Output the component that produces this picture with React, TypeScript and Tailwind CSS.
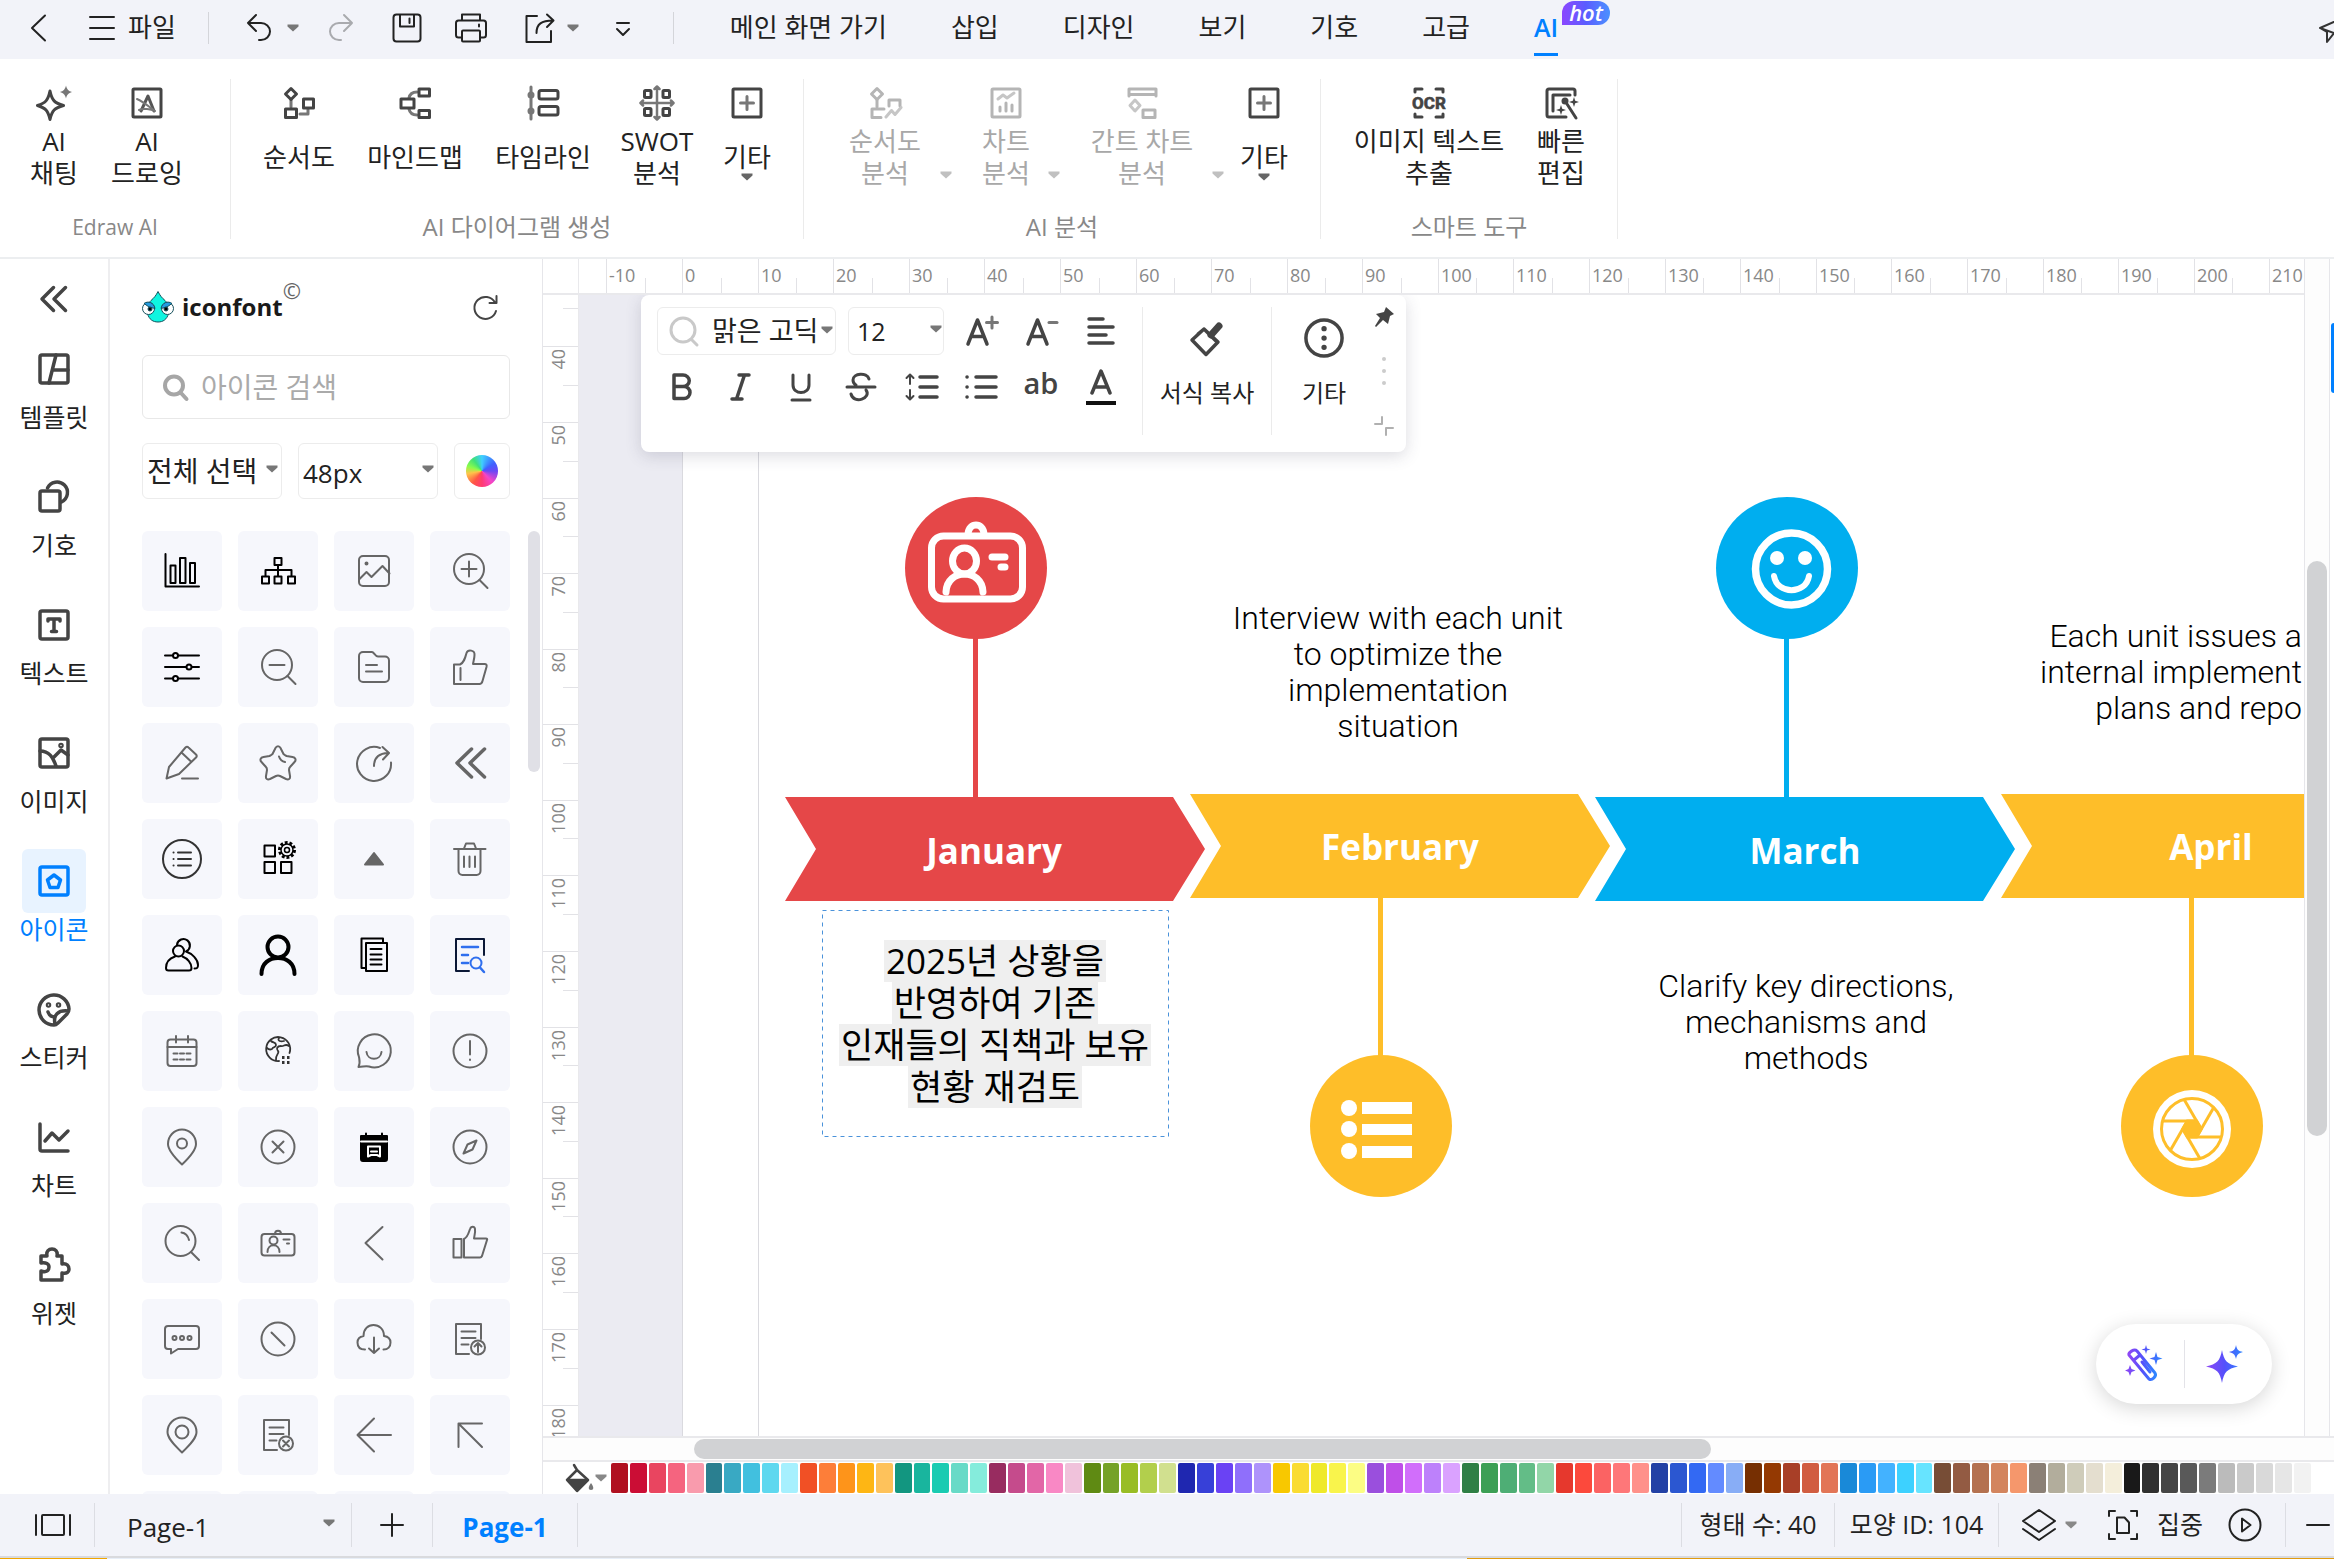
import type { ReactNode } from 'react';
import { clsx } from 'clsx';

// 10 document units at 200% zoom
const RULER_STEP = (96 / 25.4) * 20;

const SWATCHES = [
  '#b01020', '#cb0d35', '#e94560', '#f5647f', '#f99bad', '#2a7f90', '#39a9c3', '#41c0df', '#5fd8ef', '#a6f0fe',
  '#f15025', '#fd7e39', '#fe941a', '#feb614', '#fec25b', '#129680', '#19b59e', '#1acbb2', '#68dac7', '#85ecdc',
  '#982c60', '#c54b8c', '#e266a7', '#f988c5', '#f0c2db', '#5f8a13', '#75a228', '#99bd25', '#b2cf4c', '#d1e08f',
  '#1f27b0', '#3740d8', '#6a42f4', '#8f6ffb', '#ae93fb', '#f8c800', '#fadc32', '#efe92a', '#f9f44c', '#fcfd84',
  '#9a4fdd', '#bf4fe8', '#d16efb', '#bd81fb', '#daa2ff', '#2f7f45', '#3c9f55', '#4eae75', '#63bd87', '#92d6a8',
  '#e6382d', '#fc493c', '#fb6363', '#fe7779', '#ff918a', '#2341a5', '#2b57d1', '#3369f3', '#638bff', '#88adf6',
  '#762f02', '#943902', '#a83f27', '#d15d41', '#e27557', '#1989d8', '#2a9bf5', '#43b2ff', '#3dd1ff', '#67e4ff',
  '#774d36', '#935b43', '#b47150', '#d3855f', '#f5976c', '#8b8076', '#b2ad9c', '#cfccba', '#e4decf', '#f4eedb',
  '#191919', '#303030', '#454545', '#595959', '#7b7b7b', '#bbbbbb', '#cacaca', '#d9d9d9', '#e6e6e6', '#f2f2f2', '#ffffff',
];

interface IconProps {
  size?: number;
  box?: number;
  stroke?: string;
  width?: number;
  fill?: string;
  className?: string;
  children: ReactNode;
}

function Icon({ size = 36, box = 36, stroke = '#444', width = 3, fill = 'none', className, children }: IconProps) {
  return (
    <svg
      width={size}
      height={size}
      viewBox={`0 0 ${box} ${box}`}
      fill={fill}
      stroke={stroke}
      strokeWidth={width}
      strokeLinecap="round"
      strokeLinejoin="round"
      aria-hidden="true"
      className={clsx('shrink-0', className)}
    >
      {children}
    </svg>
  );
}

function Caret({ color = '#777', className }: { color?: string; className?: string }) {
  return (
    <svg width="12" height="8" viewBox="0 0 12 8" fill={color} aria-hidden="true" className={clsx('shrink-0', className)}>
      <path d="M0.5 0.5h11v2L6 7.5 0.5 2.5z" />
    </svg>
  );
}

/* ---------- title bar ---------- */

const MENUS = ['메인 화면 가기', '삽입', '디자인', '보기', '기호', '고급'];

function TitleBar() {
  return (
    <header className="relative flex h-[59px] shrink-0 items-center overflow-hidden bg-[#f2f3f9] pb-1 text-[26px] text-[#222]">
      <button aria-label="뒤로" className="ml-5">
        <Icon width={2} stroke="#222"><path d="M25 5.5L12 18l13 12.5" /></Icon>
      </button>
      <button className="ml-7 flex items-center gap-2">
        <Icon width={2} stroke="#222"><path d="M6 7h24M6 18h24M6 29h24" /></Icon>
        <span>파일</span>
      </button>
      <i className="ml-8 h-8 w-px bg-[#d4d5da]" />
      <button aria-label="실행 취소" className="ml-8">
        <Icon width={2} stroke="#222"><path d="M15 5L7 13l8 8M7 13h13a9 8.5 0 0 1 0 17h-2" /></Icon>
      </button>
      <Caret className="ml-2.5" />
      <button aria-label="다시 실행" className="ml-6">
        <Icon width={2} stroke="#a9aaae"><path d="M21 5l8 8-8 8M29 13H16a9 8.5 0 0 0 0 17h2" /></Icon>
      </button>
      <button aria-label="저장" className="ml-[30px]">
        <Icon width={2} stroke="#222">
          <rect x="4.5" y="4.5" width="27" height="27" rx="3" />
          <path d="M11 5v11.5h14V5M20.5 8.5v4.5" />
        </Icon>
      </button>
      <button aria-label="인쇄" className="ml-7">
        <Icon width={2} stroke="#222">
          <path d="M9 10.5V4.5h18v6M9 27.5H5.5A2.5 2.5 0 0 1 3 25V13a2.5 2.5 0 0 1 2.5-2.5h25A2.5 2.5 0 0 1 33 13v12a2.5 2.5 0 0 1-2.5 2.5H27M26 14.5v2" />
          <rect x="9" y="20.5" width="18" height="11" rx="1" />
        </Icon>
      </button>
      <button aria-label="내보내기" className="ml-8">
        <Icon width={2} stroke="#222">
          <path d="M16 6H5.5v26H30V21M15.5 23c0-9 5-12.5 16.5-12.5M26 4.5l6.5 6-6.5 6.5" />
        </Icon>
      </button>
      <Caret className="ml-2.5" />
      <button aria-label="더 보기" className="ml-[26px]">
        <Icon width={2} stroke="#222"><path d="M12 13h12M12 19l6 6 6-6" /></Icon>
      </button>
      <i className="ml-8 h-8 w-px bg-[#d4d5da]" />
      <nav className="ml-14 flex items-center gap-16">
        {MENUS.map((m) => (
          <a key={m} href="#" className="whitespace-nowrap">{m}</a>
        ))}
        <a href="#" className="relative text-[25px] font-semibold text-[#0080ff]">
          AI
          <span className="absolute inset-x-0 -bottom-2.5 h-[3px] bg-[#0080ff]" />
          <span className="absolute -top-2 left-7 flex h-6 w-12 items-center justify-center rounded-r-full rounded-tl-full bg-linear-to-r from-[#8a45ff] via-[#5a5cff] to-[#4a90ff] pb-0.5 text-[22px] leading-6 font-semibold text-white italic">
            hot
          </span>
        </a>
      </nav>
      <button aria-label="공유" className="absolute top-3 -right-5">
        <Icon width={2} stroke="#333"><path d="M2 16L34 2l-6 26-12-7zM2 16l7 4M9 20v10l7-9" /></Icon>
      </button>
    </header>
  );
}

/* ---------- ribbon ---------- */

const G = '#777';

const ribbonIcons: Record<string, ReactNode> = {
  chat: (
    <Icon>
      <path d="M14 6c2 9.5 4.5 12 13.5 14.5C18.5 23 16 25.5 14 34.5 12 25.5 9.5 23 1.5 20.5 9.5 18 12 15.5 14 6z" />
      <path d="M30 .5c1 4 2.5 5.5 6 6.5-3.5 1-5 2.5-6 6.5-1-4-2.5-5.5-6-6.5 3.5-1 5-2.5 6-6.5z" fill={G} stroke="none" />
    </Icon>
  ),
  draw: (
    <Icon>
      <rect x="4" y="4" width="28" height="28" rx="1" />
      <path d="M12 26l7-15 6 15" stroke="#555" />
      <path d="M8 14c5 2 10 6 18 12-4-2-12-3-16-1" stroke={G} strokeWidth="2" />
    </Icon>
  ),
  flow: (
    <Icon>
      <path d="M10 15v7M19 29h8v-5" stroke={G} />
      <path d="M10 3.5l5.5 5.5-5.5 5.5L4.5 9z" />
      <rect x="22.5" y="14" width="10" height="9" />
      <rect x="4.5" y="24" width="11" height="8.5" />
    </Icon>
  ),
  mind: (
    <Icon>
      <path d="M12 13c1-5 4-6 8-6M12 24c1 5 4 6 8 6" stroke={G} />
      <rect x="4" y="14" width="13" height="9" />
      <rect x="22" y="4" width="10.5" height="7" />
      <rect x="22" y="25.5" width="10.5" height="7" />
    </Icon>
  ),
  time: (
    <Icon>
      <path d="M6 2v32" stroke={G} />
      <circle cx="6" cy="10" r="3.5" fill={G} stroke="none" />
      <circle cx="6" cy="26" r="3.5" fill={G} stroke="none" />
      <rect x="14" y="5.5" width="19" height="8.5" rx="2" />
      <rect x="14" y="21.5" width="19" height="8.5" rx="2" />
    </Icon>
  ),
  swot: (
    <Icon>
      <path d="M18 2v32M2 18h32M15.5 4L18 1.5 20.5 4M15.5 32l2.5 2.5 2.5-2.5M4 15.5L1.5 18 4 20.5M32 15.5l2.5 2.5-2.5 2.5" stroke={G} strokeWidth="2.5" />
      <rect x="5.5" y="5.5" width="6.5" height="7" rx="1" />
      <rect x="24" y="5.5" width="6.5" height="7" rx="1" />
      <rect x="5.5" y="23.5" width="6.5" height="7" rx="1" />
      <rect x="24" y="23.5" width="6.5" height="7" rx="1" />
    </Icon>
  ),
  etc: (
    <Icon>
      <rect x="4" y="4" width="28" height="28" rx="1" />
      <path d="M18 11.5v13M11.5 18h13" stroke={G} />
    </Icon>
  ),
  flowA: (
    <Icon stroke="#b5b5b5">
      <path d="M10 15v7" />
      <path d="M10 3.5l5.5 5.5-5.5 5.5L4.5 9z" />
      <path d="M22 21v-6h11v6M17 24H5v8.5h9" />
      <path d="M19 32l5.5-6.5 3.5 4 6-7" stroke="#c6c6c6" />
    </Icon>
  ),
  chartA: (
    <Icon stroke="#b5b5b5">
      <rect x="4" y="4" width="28" height="28" rx="1" />
      <path d="M10 14l5-4 4 3 7-5" stroke="#c6c6c6" />
      <path d="M12 26v-4M18 26v-8M24 26v-6" />
    </Icon>
  ),
  ganttA: (
    <Icon stroke="#b5b5b5">
      <path d="M5 11V4h27v7M6 9.5h25" />
      <path d="M11 15l5 5.5-5 5.5-5-5.5z" stroke="#c6c6c6" />
      <rect x="19" y="25" width="12" height="7.5" />
    </Icon>
  ),
  ocr: (
    <Icon>
      <path d="M4 7V4h7M25 4h7v3M4 29v3h7M25 32h7v-3" />
      <text x="18" y="24" textAnchor="middle" fontSize="17" fontWeight="800" fill="#444" strokeWidth=".5" fontFamily="Roboto">OCR</text>
    </Icon>
  ),
  quick: (
    <Icon>
      <path d="M32 10V6a2 2 0 0 0-2-2H6a2 2 0 0 0-2 2v24a2 2 0 0 0 2 2h17" />
      <path d="M10 26V10h17" />
      <path d="M24 19l9 14" />
      <circle cx="22" cy="16" r="3.5" fill="#444" stroke="none" />
      <path d="M31 12l1.2 3.8L36 17l-3.8 1.2L31 22l-1.2-3.8L26 17l3.8-1.2zM18 20l1.2 3.8L23 25l-3.8 1.2L18 30l-1.2-3.8L13 25l3.8-1.2z" fill="#444" stroke="none" />
    </Icon>
  ),
};

interface RibbonButtonProps {
  icon: string;
  lines: string[];
  width: string;
  disabled?: boolean;
  caret?: 'below' | 'side';
}

function RibbonButton({ icon, lines, width, disabled, caret }: RibbonButtonProps) {
  return (
    <button disabled={disabled} className="flex items-end text-[26px] leading-8">
      <span className={clsx('flex flex-col items-center', width, disabled ? 'text-[#a8a8a8]' : 'text-[#222]')}>
        {ribbonIcons[icon]}
        <span className="flex h-[72px] flex-col items-center justify-center whitespace-nowrap">
          {lines.map((l) => <span key={l}>{l}</span>)}
          {caret === 'below' && <Caret color="#666" className="-mb-2" />}
        </span>
      </span>
      {caret === 'side' && (
        <span className="flex w-6 justify-center pb-3.5"><Caret color={disabled ? '#c0c0c0' : '#777'} /></span>
      )}
    </button>
  );
}

function RibbonGroup({ label, className, children }: { label: ReactNode; className: string; children: ReactNode }) {
  return (
    <section className="flex flex-col justify-between border-r border-[#ebebeb]">
      <div className={clsx('flex pt-1.5', className)}>{children}</div>
      <h2 className="-mb-1 text-center text-[24px] leading-8 text-[#888]">{label}</h2>
    </section>
  );
}

function Ribbon() {
  return (
    <div className="flex h-[200px] shrink-0 border-b-2 border-[#eceef0] bg-white pt-5 pb-[18px]">
      <RibbonGroup label={<span className="text-[21px]">Edraw AI</span>} className="pr-9 pl-2">
        <RibbonButton icon="chat" lines={['AI', '채팅']} width="w-[92px]" />
        <RibbonButton icon="draw" lines={['AI', '드로잉']} width="w-[94px]" />
      </RibbonGroup>
      <RibbonGroup label="AI 다이어그램 생성" className="px-4">
        <RibbonButton icon="flow" lines={['순서도']} width="w-[104px]" />
        <RibbonButton icon="mind" lines={['마인드맵']} width="w-32" />
        <RibbonButton icon="time" lines={['타임라인']} width="w-32" />
        <RibbonButton icon="swot" lines={['SWOT', '분석']} width="w-[100px]" />
        <RibbonButton icon="etc" lines={['기타']} width="w-20" caret="below" />
      </RibbonGroup>
      <RibbonGroup label="AI 분석" className="gap-3 pr-[34px] pl-8">
        <RibbonButton icon="flowA" lines={['순서도', '분석']} width="w-[98px]" disabled caret="side" />
        <RibbonButton icon="chartA" lines={['차트', '분석']} width="w-[72px]" disabled caret="side" />
        <RibbonButton icon="ganttA" lines={['간트 차트', '분석']} width="w-32" disabled caret="side" />
        <RibbonButton icon="etc" lines={['기타']} width="w-11" caret="below" />
      </RibbonGroup>
      <RibbonGroup label="스마트 도구" className="px-4">
        <RibbonButton icon="ocr" lines={['이미지 텍스트', '추출']} width="w-[184px]" />
        <RibbonButton icon="quick" lines={['빠른', '편집']} width="w-20" />
      </RibbonGroup>
    </div>
  );
}

/* ---------- left rail ---------- */

const RAIL: { label: string; icon: ReactNode }[] = [
  { label: '템플릿', icon: <><rect x="4" y="4" width="28" height="28" rx="2" /><path d="M20 4l-7 28M17 19h15" /></> },
  { label: '기호', icon: <><rect x="4" y="12" width="20" height="20" rx="2" /><path d="M11.5 9a10.5 10.5 0 1 1 14 14" /></> },
  { label: '텍스트', icon: <><rect x="4" y="4" width="28" height="28" rx="2" /><path d="M12 14v-2h12v2M18 12v12M15.5 24.5h5" /></> },
  { label: '이미지', icon: <><rect x="4" y="4" width="28" height="28" rx="2" /><path d="M4 16c9 0 13 6 16 15M18 22l7-7 7 5" /><circle cx="25" cy="10.5" r="1" /></> },
  { label: '아이콘', icon: <><rect x="4" y="4" width="28" height="28" rx="2" /><path d="M18 12l6.5 5-2.5 7.5h-8L11.5 17z" /></> },
  { label: '스티커', icon: <><path d="M33 18A15 15 0 1 0 18 34c2 0 3-1 4-2l9-9c1.5-1.5 2-3 2-5zM19 33c-2-9 3-14 13-13M12 21c1 3 3 5 7 5" /><circle cx="12.5" cy="14" r="1" /><circle cx="22.5" cy="14" r="1" /></> },
  { label: '차트', icon: <path d="M4 5v25a2 2 0 0 0 2 2h26M9 22l7-8 7 7 9-9" /> },
  { label: '위젯', icon: <path d="M5 33v-9c6 2 8-1 8-4s-3-5-8-4V9h6c-1-5 2-7 5-7s6 2 5 7h5v8c5-1 7 2 7 5s-2 5-7 4v7z" /> },
];

function Rail() {
  return (
    <nav className="flex w-[110px] shrink-0 flex-col items-center border-r-2 border-[#eeeef0] bg-white">
      <button aria-label="접기" className="mt-[22px] mb-5">
        <Icon><path d="M17.5 6.5L6 18l11.5 11.5M29.5 6.5L18 18l11.5 11.5" strokeWidth="3.5" /></Icon>
      </button>
      {RAIL.map(({ label, icon }) => {
        const active = label === '아이콘';
        return (
          <a key={label} href="#" className={clsx('flex h-32 flex-col items-center text-[25px] leading-8 whitespace-nowrap', active ? 'text-[#0080ff]' : 'text-[#222]')}>
            <span className={clsx('flex size-16 items-center justify-center rounded-md', active && 'bg-[#e8f3ff]')}>
              <Icon stroke={active ? '#0080ff' : '#444'} width={3.5}>{icon}</Icon>
            </span>
            {label}
          </a>
        );
      })}
    </nav>
  );
}

/* ---------- icon library ---------- */

const K = '#000';

interface Glyph {
  name: string;
  color?: string;
  width?: number;
  art: ReactNode;
}

const docBody = <path d="M35 24V9H10v30h13M15.5 16.5h14M15.5 23h14M15.5 29.5h7" />;

const GLYPHS: Glyph[] = [
  { name: 'bar chart', color: K, art: <><path d="M7.5 7v32.5H41" /><path d="M12.5 18.5h5V36h-5zM22 11h5.5v25H22zM32 16h5v20h-5z" /></> },
  { name: 'hierarchy', color: K, art: <path d="M20.5 11h7v7h-7zM24 18v11M11.5 29v-6h26v6M8 29.5h7v7H8zM20.5 29.5h7v7h-7zM34 29.5h7v7h-7z" /> },
  { name: 'image', art: <><rect x="9" y="9" width="30" height="30" rx="4" /><path d="M9.5 32l7-7 5 5 11-11 7 7.5" /><circle cx="16.5" cy="16.5" r="1" fill="#666" /></> },
  { name: 'zoom in', art: <><circle cx="23" cy="22" r="15" /><path d="M15.5 22h15M23 14.5v15M33.5 33l8 8" /></> },
  { name: 'sliders', color: K, art: <><path d="M7 12.5h8M20 12.5h21M7 24h21M34 24h7M7 35.5h8M20 35.5h21" /><circle cx="17.5" cy="12.5" r="2.5" /><circle cx="31" cy="24" r="2.5" /><circle cx="17.5" cy="35.5" r="2.5" /></> },
  { name: 'zoom out', art: <><circle cx="23" cy="22" r="15" /><path d="M15.5 22h15M33.5 33l8 8" /></> },
  { name: 'folder note', art: <path d="M13 9h9c2 0 3 4.5 6 4.5h7a4 4 0 0 1 4 4V35a4 4 0 0 1-4 4H13a4 4 0 0 1-4-4V13a4 4 0 0 1 4-4zM16 22h11M16 28.5h16" /> },
  { name: 'thumb up', art: <path d="M8 21.5h6c4-2 5-6 6.5-11.5C22 6 29 7 28.5 12c0 3-1 6-1.5 9h11.5c2 0 2.5 1 2 3L36.5 38c-.5 2-1.5 3-3 3H8zM14.5 25v12" /> },
  { name: 'edit', art: <path d="M8.5 39.5L11 28 27.5 8.5c1-1 2-1 3 0l7.5 7c1 1 1 2 0 3L21 35zM23.5 13.5l9.5 9M24 39.5h16" /> },
  { name: 'star', art: <path d="M21.5 9c1-2.5 4-2.5 5 0l3 6c1 1 2 1.5 3 2l6 1c3 .5 4 3 2 5l-4.5 5c-1 1-1 2-1 3l1 6c.5 3-1.5 4-4 3l-6-3c-1-.5-3-.5-4 0l-6 3c-2.5 1-4.5 0-4-3l1-6c0-1 0-2-1-3l-4.5-5c-2-2-1-4.5 2-5l6-1c1-.5 2-1 3-2zM25 17.5c1 3 3 5 6 5.5" /> },
  { name: 'share', art: <path d="M30 9a17 17 0 1 0 11 14.5M24 27c0-8 4-12.5 14-13M32.5 8l6.5 6-6 6.5" /> },
  { name: 'collapse', width: 3.5, art: <path d="M25.5 10L11 24l14.5 14M38.5 10L24 24l14.5 14" /> },
  { name: 'list circle', color: '#333', art: <><circle cx="24" cy="24" r="19" /><path d="M20 17.5h13M20 24h13M20 30.5h13M15.5 17.5h.1M15.5 24h.1M15.5 30.5h.1" /></> },
  { name: 'apps settings', color: K, art: <><path d="M10.5 10.5H21v11H10.5zM10.5 27H21v11H10.5zM27 27h10.5v11H27z" /><circle cx="33" cy="15" r="7.5" strokeDasharray="2.8 1.9" strokeWidth="3" strokeLinecap="butt" /><circle cx="33" cy="15" r="6" strokeWidth="1.5" /><circle cx="33" cy="15" r="2.5" strokeWidth="1.5" /></> },
  { name: 'triangle', art: <path d="M24 18l9 11.5H15z" fill="#666" /> },
  { name: 'trash', art: <path d="M8 14h31.5M18 13.5l2-5h8l2 5M12.5 14v22a4 4 0 0 0 4 4h14a4 4 0 0 0 4-4V14M18 21.5V32M23.5 21.5V32M29 21.5V32" /> },
  { name: 'group', color: K, art: <><circle cx="20.5" cy="20" r="5.5" /><path d="M17 25.5C11 27.5 8 32 8 37c0 2 .5 2.5 2.5 2.5H31c2 0 2.5-.5 2.5-2.5 0-5-4-9.5-9-11.5" /><path d="M19 13.5a6.5 6.5 0 1 1 9 7c6 2 12 8 12 13.5 0 3-1 3.5-3.5 3.5" /></> },
  { name: 'person', color: K, width: 4, art: <><circle cx="24" cy="16" r="10.5" /><path d="M7.5 43c0-11 8-16 16.5-16s16.5 5 16.5 16" /></> },
  { name: 'documents', color: K, art: <path d="M15.5 37h-4V7.5H33v4M16 12h21v28H16zM20.5 18h11M20.5 23.5h11M20.5 28.5h11M20.5 33.5h11" /> },
  { name: 'document search', color: '#0b1836', art: <><path d="M38 24V8H10v32h13" /><path d="M16 16h16M16 24h6M16 32h6M34 36.5l4 4.5" stroke="#2f6fee" strokeWidth="2.5" /><circle cx="30" cy="32" r="5.5" stroke="#2f6fee" /></> },
  { name: 'calendar', art: <><rect x="9.5" y="12.5" width="29" height="26.5" rx="3" /><path d="M9.5 20h29M18 9v6.5M30 9v6.5M15.5 26.5h4M22 26.5h4M28.5 26.5h4M15.5 32.5h4M22 32.5h4M28.5 32.5h4" /></> },
  { name: 'globe', color: '#333', width: 1.8, art: <><path d="M25 34a12 12 0 1 1 10.5-8" /><path d="M17 14c2 2 5 1 5 4s-3 1-4 4c-2 1-4 0-5-1M25 11c-2 3 2 4 5 3M35 19c-4-3-5 1-8 0-4 0-5 3-3 5s-3 4-2 9" /><path d="M28 30.5h2.5M33 30.5h2.5M28 35.5h2.5M33 35.5h2.5" strokeWidth="3" strokeLinecap="butt" /></> },
  { name: 'chat smile', art: <path d="M8.5 40c2-4 1-7 .5-10A16.5 16.5 0 1 1 19 39.5c-4-1-6 .5-10.5.5zM16.5 25c1 9 14 9 15 0" /> },
  { name: 'alert', art: <><circle cx="24" cy="24" r="16.5" /><path d="M24 14v13.5M24 32.5v.5" /></> },
  { name: 'place', art: <><path d="M24 41.5C15 33 10 27 10 21a14 14.5 0 0 1 28 0c0 6-5 12-14 20.5z" /><circle cx="24" cy="20.5" r="5" /></> },
  { name: 'close circle', art: <><circle cx="24" cy="24" r="16.5" /><path d="M18.5 18.5l11 11M29.5 18.5l-11 11" /></> },
  { name: 'schedule', color: K, art: <><path d="M11 13h26v23a2 2 0 0 1-2 2H13a2 2 0 0 1-2-2z" fill="#000" /><path d="M16 10.5v4M32 10.5v4" /><path d="M11 18.5h26M18 23.5h12v10l-3-1.5h-6l-3 1.5zM21 28.5h6" stroke="#fff" /></> },
  { name: 'compass', art: <><circle cx="24" cy="24" r="16.5" /><path d="M30.5 17.5l-4 9-9 4 4-9z" /></> },
  { name: 'search', art: <><circle cx="22.5" cy="22" r="15" /><path d="M33 33l8 8M23.5 13.5c4 .5 6.5 3.5 7.5 7.5" /></> },
  { name: 'id card', art: <><rect x="7.5" y="15" width="33" height="21.5" rx="3" /><path d="M21 15c0-4.5 6-4.5 6 0M13.5 33c0-9 12-9 12 0M29.5 20.5h6M33 24.5h2" /><circle cx="19.5" cy="21.5" r="4" /></> },
  { name: 'previous', art: <path d="M32.5 8L15.5 24l17 16.5" /> },
  { name: 'like', art: <path d="M7.5 20h8v18.5h-8zM18 20c4-2 4.5-6 6-10 1-3 4.5-3 5 0 .5 3-.5 6-1 9.5h12c1 0 1.5.5 1 1.5l-5 16c-.5 1-1 1.5-2 1.5H18z" /> },
  { name: 'message', art: <><path d="M10 11h28a3 3 0 0 1 3 3v17a3 3 0 0 1-3 3H20l-7 4.5V34h-3a3 3 0 0 1-3-3V14a3 3 0 0 1 3-3z" /><circle cx="16.5" cy="23" r="2" /><circle cx="24" cy="23" r="2" /><circle cx="31.5" cy="23" r="2" /></> },
  { name: 'forbidden', art: <><circle cx="24" cy="24" r="16.5" /><path d="M17.5 17.5l13 13" /></> },
  { name: 'cloud download', art: <path d="M15 34.5c-5 0-7.5-3-7.5-7s3-6 6-6.5C13.5 14 18 10 23.5 10S34 14 34 21c3.5.5 6.5 2.5 6.5 6.5s-2.5 7-7 7M24 22.5V38M19 33.5l5 4.5 5-4.5" /> },
  { name: 'document upload', art: <>{docBody}<circle cx="32" cy="32.5" r="7" /><path d="M32 37v-8.5M28.5 31.5L32 28l3.5 3.5" /></> },
  { name: 'location', art: <><path d="M24 41.5C14 32 9.5 26.5 9.5 21a14.5 14.5 0 0 1 29 0c0 5.5-4.5 11-14.5 20.5z" /><circle cx="24" cy="21" r="6.5" /></> },
  { name: 'document remove', art: <>{docBody}<circle cx="32" cy="32.5" r="7" /><path d="M29 29.5l6 6M35 29.5l-6 6" /></> },
  { name: 'arrow left', art: <path d="M41 24H7.5M24 7.5L7.5 24 24 40.5" /> },
  { name: 'arrow up left', art: <path d="M12.5 36V12.5H36M13 13l23 23" /> },
  { name: 'more 1', art: null },
  { name: 'more 2', art: null },
  { name: 'more 3', art: null },
  { name: 'more 4', art: null },
];

function IconfontLogo() {
  return (
    <svg width="32" height="32" viewBox="0 0 32 32" stroke="#16505c" strokeWidth="1" aria-hidden="true">
      <path d="M16 .5c2 4 4 6.5 7 9 3 3 5 7 3.5 13C25 28.5 21 31 16 31S7 28.5 5.5 22.5C4 16.5 6 12.5 9 9.5c3-2.500 5-5 7-9z" fill="#0ff5e0" />
      <circle cx="6.5" cy="17.5" r="6" fill="#fff" />
      <circle cx="25.5" cy="17.5" r="6" fill="#fff" />
      <path d="M2 12.5c4-3 10-1 11 5l-6-1.5zM30 12.5c-4-3-10-1-11 5l6-1.5z" fill="#249be0" />
      <circle cx="8" cy="18" r="2" fill="#000" />
      <circle cx="24" cy="18" r="2" fill="#000" />
    </svg>
  );
}

function Library() {
  return (
    <aside className="relative w-[433px] shrink-0 overflow-hidden border-r border-[#e6e6ea] bg-white px-8 pt-8">
      <header className="flex h-8 items-center">
        <IconfontLogo />
        <h1 className="ml-2 text-[24px] font-bold text-[#1a1a1a]">iconfont</h1>
        <sup className="mb-3 text-[22px] leading-6 text-[#666]">©</sup>
        <button aria-label="새로 고침" className="mr-2 ml-auto">
          <Icon width={2} size={32} box={32} stroke="#444"><path d="M26 20a11 11 0 1 1-1-8.5M26.5 5v7h-7" /></Icon>
        </button>
      </header>
      <label className="mt-8 flex h-16 items-center rounded-md border border-[#e8e8e8] px-4">
        <Icon size={32} box={32} stroke="#a6a6a6" width={4}><circle cx="15" cy="14.5" r="9" /><path d="M22 22l5.5 6" /></Icon>
        <input aria-label="아이콘 검색" placeholder="아이콘 검색" className="ml-2.5 min-w-0 flex-1 bg-transparent text-[28px] outline-none placeholder:text-[#aaa]" />
      </label>
      <div className="mt-6 grid grid-cols-[1fr_1fr_56px] gap-4 text-[#222]">
        <div className="relative">
          <select aria-label="색상 범위" className="h-14 w-full appearance-none rounded-md border border-[#ececec] bg-white pl-1 text-[28px]">
            <option>전체 선택</option>
          </select>
          <Caret className="pointer-events-none absolute top-[22px] right-1" />
        </div>
        <div className="relative">
          <select aria-label="크기" className="h-14 w-full appearance-none rounded-md border border-[#ececec] bg-white pt-1 pl-1 text-[26px]">
            <option>48px</option>
          </select>
          <Caret className="pointer-events-none absolute top-[22px] right-1" />
        </div>
        <button aria-label="색상" className="flex h-14 items-center justify-center rounded-md border border-[#ececec]">
          <span className="size-8 rounded-full bg-[conic-gradient(#3fd0ff,#3f62ff_16%,#6a48f5_25%,#f545c8_38%,#ff3a72_50%,#ff5545_60%,#ffc34a_72%,#8dfc4a_80%,#3fe07a_90%,#3fd0ff)]" />
        </button>
      </div>
      <div className="mt-8 grid grid-cols-4 gap-4">
        {GLYPHS.map(({ name, color = '#666', width = 2, art }) => (
          <button key={name} aria-label={name} className="flex h-20 items-center justify-center rounded-md bg-[#f6f7fc]">
            <Icon size={48} box={48} stroke={color} width={width}>{art}</Icon>
          </button>
        ))}
      </div>
      <div className="absolute top-[272px] right-0.5 h-[241px] w-3 rounded-full bg-[#e0e0e6]" />
    </aside>
  );
}

/* ---------- rulers ---------- */

const H_VALUES = Array.from({ length: 23 }, (_, i) => (i - 1) * 10);
const V_VALUES = Array.from({ length: 15 }, (_, i) => (i + 4) * 10);

const stepSize = (v: number) => Math.round(((v + 10) / 10) * RULER_STEP) - Math.round((v / 10) * RULER_STEP);

function TopRuler() {
  return (
    <div className="flex h-9 overflow-hidden border-b-2 border-[#e9e9ec] bg-white text-[18px] leading-8 text-[#888]">
      <div className="w-[27px] shrink-0" />
      {H_VALUES.map((v) => (
        <div key={v} style={{ width: stepSize(v) }} className="relative shrink-0 border-l border-[#e2e2e6] pl-0.5">
          {v}
          <i className="absolute bottom-0 left-1/2 h-[15px] w-px bg-[#e2e2e6]" />
        </div>
      ))}
    </div>
  );
}

function SideRuler() {
  return (
    <div className="flex w-9 shrink-0 flex-col overflow-hidden border-r border-[#e9e9ec] bg-white text-[18px] leading-[30px] text-[#888]">
      <div className="relative h-[51px] shrink-0">
        <i className="absolute right-0 bottom-[37px] h-px w-[15px] bg-[#e2e2e6]" />
      </div>
      {V_VALUES.map((v) => (
        <div key={v} style={{ height: stepSize(v) }} className="relative shrink-0 border-t border-[#e2e2e6]">
          <span className="rotate-180 pb-0.5 [writing-mode:vertical-rl]">{v}</span>
          <i className="absolute top-1/2 right-0 h-px w-[15px] bg-[#e2e2e6]" />
        </div>
      ))}
    </div>
  );
}

/* ---------- text toolbar ---------- */

const TEXT_TOOLS: { name: string; art: ReactNode }[] = [
  { name: '굵게', art: <path d="M11 6h9a6 5.5 0 0 1 0 11.5h-9zM11 17.5h10a6 6 0 0 1 0 12H11z" /> },
  { name: '기울임꼴', art: <path d="M16 6h10M9 30h10M21.5 6l-8 24" /> },
  { name: '밑줄', art: <path d="M10 6v10c0 10 16 10 16 0V6M9 31h18" strokeWidth="3" /> },
  { name: '취소선', art: <path d="M26 10c-2-7-16-6-16 1 0 2 1 4 3 5M4 18h28M23 21c6 8-12 15-15 4" strokeWidth="3" /> },
  { name: '줄 간격', art: <><path d="M17 8h17M17 18h17M17 28h17" /><path d="M7 7v8M7 21v8M3.5 9L7 5.5 10.5 9M3.5 27L7 30.5l3.5-3.5" strokeWidth="2" /></> },
  { name: '목록', art: <path d="M13 8h20M13 18h20M13 28h20M4 8h.1M4 18h.1M4 28h.1" /> },
];

function TextToolbar() {
  return (
    <div role="toolbar" className="absolute top-0 left-[62px] z-10 flex h-[157px] w-[765px] rounded-lg bg-white pt-3 pl-4 shadow-[0_4px_16px_rgba(60,60,90,0.18)]">
      <div>
        <div className="flex items-center">
          <label className="relative flex h-12 w-[179px] items-center rounded-md border border-[#ececec] pl-2">
            <Icon stroke="#c9c9c9" width={3}><circle cx="17" cy="17" r="12" /><path d="M26 27l5 5" /></Icon>
            <input aria-label="글꼴" defaultValue="맑은 고딕" className="ml-2.5 w-[108px] bg-transparent text-[27px] text-[#222] outline-none" />
            <Caret className="absolute top-[18px] right-0.5" />
          </label>
          <div className="relative ml-3">
            <select aria-label="글꼴 크기" className="h-12 w-24 appearance-none rounded-md border border-[#ececec] bg-white pt-0.5 pl-2 text-[25px] text-[#222]">
              <option>12</option>
            </select>
            <Caret className="pointer-events-none absolute top-[18px] right-0.5" />
          </div>
          <div className="ml-5 flex gap-6">
            <button aria-label="글꼴 크게"><Icon><path d="M4 31L13.5 7 23 31M7.5 23.5h12" strokeWidth="3.5" /><path d="M28 4v11M22.5 9.5h11" stroke={G} /></Icon></button>
            <button aria-label="글꼴 작게"><Icon><path d="M4 31L13.5 7 23 31M7.5 23.5h12" strokeWidth="3.5" /><path d="M25 9.5h8" stroke={G} /></Icon></button>
            <button aria-label="맞춤"><Icon><path d="M5 6h14M5 14h24M5 22h17M5 30h24" strokeWidth="3.5" /></Icon></button>
          </div>
        </div>
        <div className="mt-3 flex gap-6 pl-1.5">
          {TEXT_TOOLS.map(({ name, art }) => (
            <button key={name} aria-label={name}><Icon width={3.5}>{art}</Icon></button>
          ))}
          <button aria-label="대소문자" className="w-9 pb-2 text-center text-[29px] leading-8 font-semibold text-[#444]">ab</button>
          <button aria-label="글꼴 색"><Icon><path d="M9 24L18 2l9 22M12 18h12" strokeWidth="3.5" /><path d="M3 34h30" stroke="#111" strokeWidth="4" strokeLinecap="butt" /></Icon></button>
        </div>
      </div>
      <i className="ml-[22px] h-32 w-px bg-[#ebebeb]" />
      <button className="mb-8 flex w-32 flex-col items-center pt-3.5 text-[24px] leading-8 whitespace-nowrap text-[#222]">
        <Icon>
          <path d="M15 8L3 19l14 14.5L29 21zM9 13l6-5 13 13" strokeWidth="3.5" />
          <path d="M22 14l8-9" strokeWidth="7" />
        </Icon>
        <span className="mt-5">서식 복사</span>
      </button>
      <i className="h-32 w-px bg-[#ebebeb]" />
      <button className="flex w-[104px] flex-col items-center pt-2.5 text-[24px] leading-8 text-[#222]">
        <Icon size={42} width={3}>
          <circle cx="18" cy="18" r="15.5" />
          <path d="M18 10h.1M18 18h.1M18 26h.1" strokeWidth="4.5" />
        </Icon>
        <span className="mt-[18px]">기타</span>
      </button>
      <div className="-ml-2 flex flex-col items-center">
        <button aria-label="고정">
          <Icon size={20} box={20} fill="#444" stroke="none"><path d="M12 0l8 7-4 2-2 8-5-4-7 7-1-1 5-8-4-4 8-2z" /></Icon>
        </button>
        <Icon size={32} box={32} fill="#ccc" stroke="none" className="mt-7"><circle cx="16" cy="4" r="2" /><circle cx="16" cy="16" r="2" /><circle cx="16" cy="28" r="2" /></Icon>
        <Icon size={22} box={22} stroke="#b0b0b0" width={2} className="mt-7"><path d="M2 9h7V2M13 20v-7h7" /></Icon>
      </div>
    </div>
  );
}

/* ---------- canvas ---------- */

function Timeline() {
  return (
    <svg width="1700" height="1140" viewBox="0 0 1700 1140" className="absolute top-0 left-0" aria-hidden="true">
      <g fill="#e54748">
        <path d="M102 502h388l32 52-32 52H102l31-52z" />
        <path d="M290 340h5v164h-5z" />
        <circle cx="293" cy="273" r="71" />
      </g>
      <g fill="#febe29">
        <path d="M507 499h388l32 52-32 52H507l31-52zM1318 499h388l32 52-32 52h-388l31-52z" />
        <path d="M695 600h5v164h-5zM1506 600h5v164h-5z" />
        <circle cx="698" cy="831" r="71" />
        <circle cx="1509" cy="831" r="71" />
      </g>
      <g fill="#00aeef">
        <path d="M912 502h388l32 52-32 52H912l31-52z" />
        <path d="M1101 340h5v164h-5z" />
        <circle cx="1104" cy="273" r="71" />
      </g>
      {/* text frame */}
      <rect x="139.5" y="615.5" width="346" height="226" fill="none" stroke="#4a92da" strokeDasharray="4 4" />
      {/* badge */}
      <g fill="none" stroke="#fff" strokeWidth="7" strokeLinecap="round">
        <rect x="248.5" y="241" width="91" height="63" rx="12" />
        <path d="M285 239c1-12 15-12 16 0" />
        <ellipse cx="281.5" cy="266" rx="12" ry="13" />
        <path d="M263 297c1-24 36-24 37 0M309 262h13M318 272h4" />
      </g>
      {/* smile */}
      <g fill="none" stroke="#fff" strokeLinecap="round">
        <circle cx="1108.5" cy="274" r="36" strokeWidth="7.5" />
        <path d="M1091 281c3 19 32 19 35 0" strokeWidth="6" />
        <g fill="#fff" stroke="none">
          <circle cx="1094" cy="263" r="7" />
          <circle cx="1122" cy="263" r="7" />
        </g>
      </g>
      {/* bullet list */}
      <g fill="#fff">
        <circle cx="666" cy="813" r="8" />
        <circle cx="666" cy="834" r="8" />
        <circle cx="666" cy="856" r="8" />
        <path d="M679 807h50v12h-50zM679 829h50v11h-50zM679 851h50v12h-50z" />
      </g>
      {/* shutter */}
      <circle cx="1509" cy="834" r="39" fill="#fff" />
      <g stroke="#febe29" strokeWidth="3" fill="none">
        <circle cx="1509" cy="834" r="30.5" />
        {[0, 60, 120, 180, 240, 300].map((a) => (
          <path key={a} d="M1480 826h33.5" transform={`rotate(${a} 1509 834)`} />
        ))}
        <path d="M1504.4 826h9.2l4.6 8-4.6 8h-9.2l-4.6-8z" fill="#febe29" />
      </g>
    </svg>
  );
}

const noteText = "absolute text-center font-['Roboto',sans-serif] text-[32px] leading-9 font-light text-black";
const monthText = 'absolute w-[420px] text-center text-[35px] leading-[56px] font-bold text-white';

function Canvas() {
  return (
    <div className="relative min-w-0 flex-1 overflow-hidden bg-[#ebebf2]">
      <TextToolbar />
      <div className="absolute inset-y-0 right-0 left-[103px] border-l border-[#dadadf] bg-white">
        <i className="absolute inset-y-0 left-[75px] w-px bg-[#dadadf]" />
        <Timeline />
        <span className={clsx(monthText, 'top-[528px] left-[101px]')}>January</span>
        <span className={clsx(monthText, 'top-[524px] left-[507px]')}>February</span>
        <span className={clsx(monthText, 'top-[528px] left-[912px]')}>March</span>
        <span className={clsx(monthText, 'top-[524px] left-[1318px]')}>April</span>

        <div className="absolute top-[615px] left-[138px] flex h-[228px] w-[348px] flex-col items-center justify-center text-[35px] leading-[42px] whitespace-nowrap text-black">
          {['2025년 상황을', '반영하여 기존', '인재들의 직책과 보유', '현황 재검토'].map((l) => (
            <span key={l} className="bg-[#efefef] px-0.5">{l}</span>
          ))}
        </div>

        <p className={clsx(noteText, 'top-[305px] left-[540px] w-[350px]')}>
          Interview with each unit<br />to optimize the<br />implementation<br />situation
        </p>
        <p className={clsx(noteText, 'top-[673px] left-[948px] w-[350px]')}>
          Clarify key directions,<br />mechanisms and<br />methods
        </p>
        <p className={clsx(noteText, 'top-[323px] right-0.5 text-right whitespace-nowrap')}>
          Each unit issues a<br />internal implement<br />plans and repo
        </p>
      </div>

      <div className="absolute right-8 bottom-8 flex h-20 w-44 items-center rounded-full bg-white pr-2 shadow-[0_4px_20px_rgba(0,0,0,0.16)]">
        <svg width="0" height="0" className="absolute" aria-hidden="true">
          <linearGradient id="ai" x1="0" x2="1" y1="0" y2="0">
            <stop offset="0" stopColor="#8e48f5" />
            <stop offset=".5" stopColor="#5550fb" />
            <stop offset="1" stopColor="#2f86ff" />
          </linearGradient>
        </svg>
        <button aria-label="AI 편집" className="flex flex-1 justify-center pl-2">
          <Icon size={38} box={38} stroke="url(#ai)" width={3}>
            <path d="M4 10c-1-2 5-7 8-4l18 22c2 3-3 8-6 6zM9 15l6-5M17 17l8 10" />
            <path d="M21 0l1 3.5 3.5 1-3.5 1-1 3.5-1-3.5-3.5-1 3.5-1zM31 7l1.5 5 5 1.5-5 1.5-1.5 5-1.5-5-5-1.5 5-1.5zM5 20l1.5 4 4 1.5-4 1.5L5 31l-1.5-4L0 25.5 3.5 24z" fill="url(#ai)" stroke="none" />
          </Icon>
        </button>
        <i className="h-12 w-px bg-[#e3e3e8]" />
        <button aria-label="AI 도우미" className="flex flex-1 justify-center">
          <Icon size={38} box={38} fill="url(#ai)" stroke="none">
            <path d="M17 5c2 11 5 14 16 16.5C22 24 19 27 17 38c-2-11-5-14-16-16.5C12 19 15 16 17 5zM31 0c1 5 2.5 6 7 7-4.5 1-6 2.5-7 7-1-4.5-2.5-6-7-7 4.5-1 6-2 7-7z" />
          </Icon>
        </button>
      </div>
    </div>
  );
}

function Workspace() {
  return (
    <main className="flex min-w-0 flex-1 flex-col">
      <div className="flex min-h-0 flex-1">
        <div className="flex min-w-0 flex-1 flex-col">
          <div className="flex">
            <div className="h-9 w-9 shrink-0 border-r border-b-2 border-[#e9e9ec] bg-white" />
            <div className="min-w-0 flex-1"><TopRuler /></div>
          </div>
          <div className="flex min-h-0 flex-1">
            <SideRuler />
            <Canvas />
          </div>
        </div>
        <div className="w-[26px] shrink-0 border-x border-[#e6e6ea] bg-[#fdfdfd] pt-[302px]">
          <div className="mx-auto h-[575px] w-5 rounded-full bg-[#d1d2d4]" />
        </div>
        <div className="w-1 shrink-0 bg-white pt-16">
          <div className="ml-px h-[70px] rounded-l-sm bg-[#0080ff]" />
        </div>
      </div>
      <div className="h-[26px] shrink-0 border-y-2 border-[#e9e9ec] bg-[#fdfdfd] pl-[151px]">
        <div className="mt-px h-5 w-[62%] rounded-full bg-[#d1d2d4]" />
      </div>
      <div className="flex h-8 shrink-0 items-center bg-white pr-1">
        <button aria-label="채우기" className="mr-1 ml-5 flex items-center">
          <Icon size={32} box={32} width={2.5}>
            <path d="M11 3l3 5M14 8L4 18l10 11 11-11zM14 8l11 10" />
            <path d="M6 18h18L14 28z" fill="#444" />
            <path d="M28 21c3 4 3 7 0 7s-3-3 0-7z" fill={G} stroke="none" />
          </Icon>
          <Caret color="#888" />
        </button>
        <div className="flex h-[30px] flex-1 gap-0.5">
          {SWATCHES.map((c, i) => (
            <button key={i} aria-label={c} style={{ backgroundColor: c }} className="flex-1 rounded-xs" />
          ))}
        </div>
      </div>
    </main>
  );
}

/* ---------- status bar ---------- */

function Divider() {
  return <i className="h-11 w-px shrink-0 bg-[#dcdde3]" />;
}

function StatusBar() {
  return (
    <footer className="flex h-16 shrink-0 items-center overflow-hidden border-b-2 border-[#d9dade] bg-[#f2f3f9] text-[25px] text-[#222]">
      <button aria-label="페이지 보기" className="flex w-[94px] justify-center pl-3">
        <Icon width={2} stroke="#222"><path d="M1 8v20M35 8v20" /><rect x="7" y="8" width="22" height="20" rx="1" /></Icon>
      </button>
      <Divider />
      <div className="relative">
        <select aria-label="페이지" className="h-12 w-64 appearance-none bg-transparent pt-1 pl-8 text-[26px]">
          <option>Page-1</option>
        </select>
        <Caret className="pointer-events-none absolute top-[18px] right-4" />
      </div>
      <Divider />
      <button aria-label="페이지 추가" className="flex w-20 justify-center">
        <Icon width={2} stroke="#222"><path d="M18 7v22M7 18h22" /></Icon>
      </button>
      <Divider />
      <a href="#" className="w-36 pt-1 text-center text-[26px] font-bold text-[#0080ff]">Page-1</a>
      <Divider />
      <div className="ml-auto flex items-center whitespace-nowrap">
        <Divider />
        <span className="w-[152px] text-center">형태 수: 40</span>
        <Divider />
        <span className="w-[163px] text-center">모양 ID: 104</span>
        <Divider />
        <button aria-label="레이어" className="ml-[22px] flex items-center gap-2">
          <Icon width={2} stroke="#222"><path d="M18 3l16 11-16 11L2 14zM2 22l16 11 16-11" /></Icon>
          <Caret color="#888" />
        </button>
        <button className="ml-7 flex items-center gap-4">
          <Icon width={2} stroke="#222"><path d="M4 9V4h6M26 4h6v5M4 27v5h6M26 32h6v-5M12 10.5h7.5l4.5 5V26H12z" /></Icon>
          집중
        </button>
        <button aria-label="재생" className="mr-[22px] ml-6">
          <Icon width={2} stroke="#222"><circle cx="18" cy="18" r="15.5" /><path d="M15 11.5v13l8.5-6.5z" /></Icon>
        </button>
        <Divider />
        <button aria-label="축소" className="ml-5 w-7">
          <Icon size={24} box={24} width={2} stroke="#222"><path d="M1 12h22" /></Icon>
        </button>
      </div>
    </footer>
  );
}

export default function App() {
  return (
    <div className="flex h-screen flex-col overflow-hidden bg-white font-['Open_Sans','Noto_Sans_CJK_KR',sans-serif]">
      <TitleBar />
      <Ribbon />
      <div className="flex min-h-0 flex-1">
        <Rail />
        <Library />
        <Workspace />
      </div>
      <StatusBar />
      <div className="flex h-px shrink-0">
        <i className="w-[107px] bg-[#f0a500]" />
        <i className="flex-1 bg-[#e8eef8]" />
        <i className="w-[867px] bg-[#e09a10]" />
      </div>
    </div>
  );
}
